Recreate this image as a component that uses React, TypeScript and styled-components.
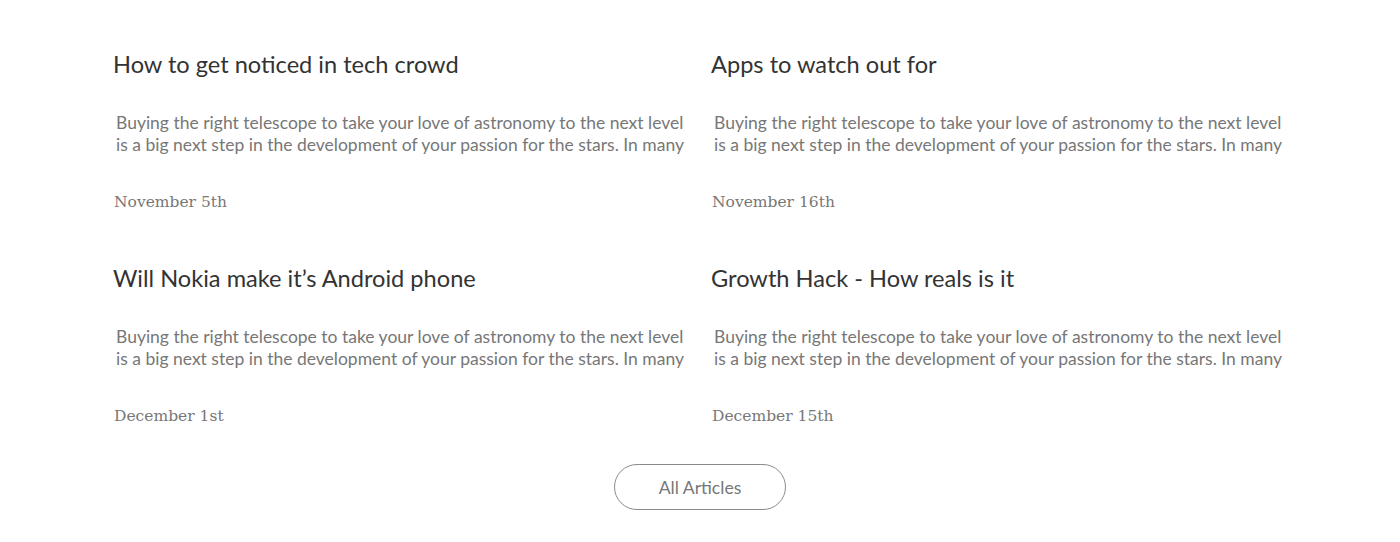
import React from "react";
import styled, { createGlobalStyle } from "styled-components";

const Global = createGlobalStyle`
  html, body { margin: 0; padding: 0; background: #fff; }
  body { font-family: Lato, "Noto Sans", sans-serif; }
`;

const Page = styled.main`
  padding: 49px 0 0 114px;
  display: flex;
  flex-direction: column;
`;

const Grid = styled.section`
  display: grid;
  grid-template-columns: 598px 598px;
  row-gap: 51px;
`;

const Card = styled.article`
  display: flex;
  flex-direction: column;
`;

const Title = styled.h2`
  margin: 0 0 0 -1px;
  font-family: Lato, sans-serif;
  font-weight: 400;
  font-size: 23.6px;
  line-height: 30px;
  color: #333;
`;

const Body = styled.p`
  margin: 33px 0 0 2px;
  font-family: Lato, sans-serif;
  font-size: 17.5px;
  line-height: 22px;
  color: #777;
  width: 574px;
`;

const DateText = styled.time`
  margin-top: 36px;
  font-family: "DejaVu Serif", serif;
  font-size: 15.5px;
  line-height: 20px;
  color: #777;
`;

const Footer = styled.div`
  display: flex;
  justify-content: center;
  margin: 38px 0 0 -114px;
`;

const Button = styled.button`
  width: 172px;
  height: 46px;
  border: 1px solid #8a8a8a;
  border-radius: 23px;
  background: #fff;
  font-family: Lato, sans-serif;
  font-size: 17.6px;
  color: #777;
`;

const articles = [
  { title: "How to get noticed in tech crowd", date: "November 5th" },
  { title: "Apps to watch out for", date: "November 16th" },
  { title: "Will Nokia make it’s Android phone", date: "December 1st" },
  { title: "Growth Hack - How reals is it", date: "December 15th" },
];

const text =
  "Buying the right telescope to take your love of astronomy to the next level is a big next step in the development of your passion for the stars. In many";

export default function App() {
  return (
    <>
      <Global />
      <Page>
        <Grid>
          {articles.map((a) => (
            <Card key={a.title}>
              <Title>{a.title}</Title>
              <Body>{text}</Body>
              <DateText>{a.date}</DateText>
            </Card>
          ))}
        </Grid>
        <Footer>
          <Button>All Articles</Button>
        </Footer>
      </Page>
    </>
  );
}
